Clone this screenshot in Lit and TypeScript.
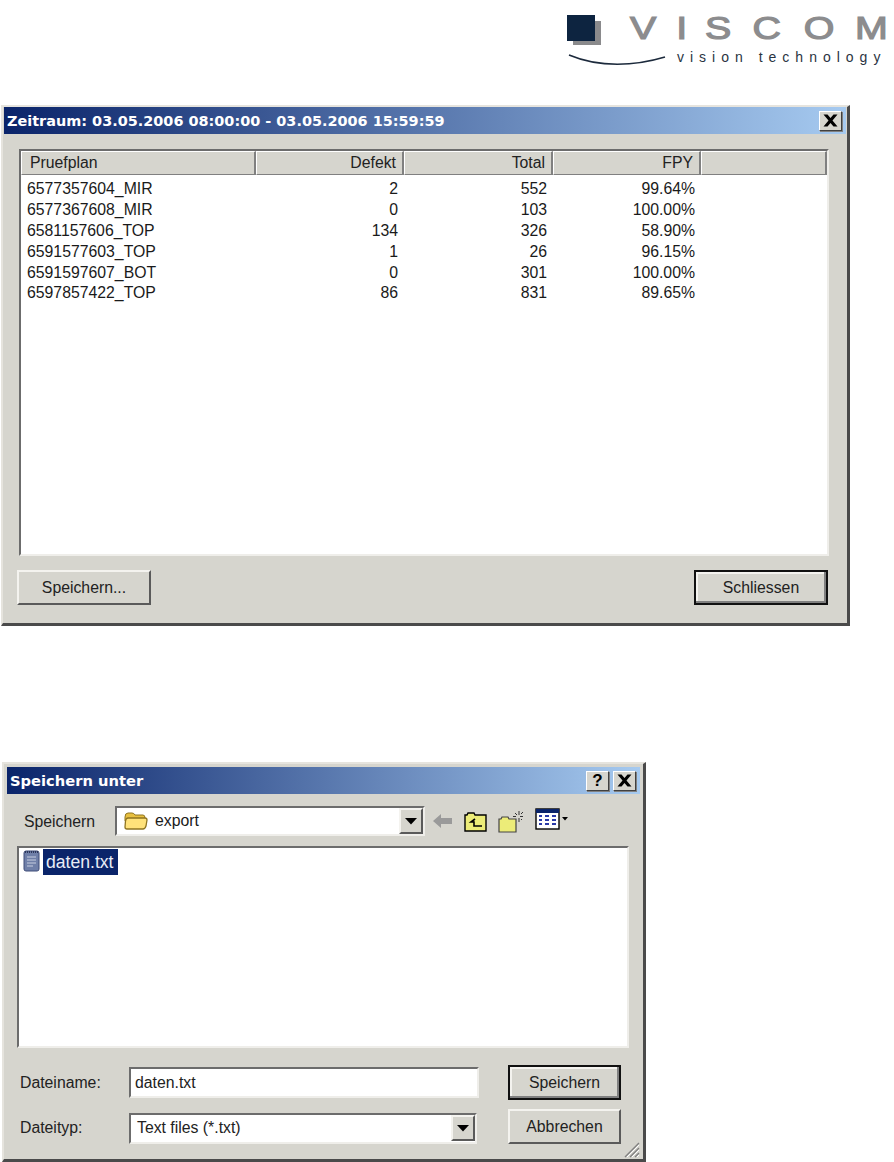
import { LitElement, html, css, svg } from "lit";
import { customElement } from "lit/decorators.js";

const rows = [
  ["6577357604_MIR", "2", "552", "99.64%"],
  ["6577367608_MIR", "0", "103", "100.00%"],
  ["6581157606_TOP", "134", "326", "58.90%"],
  ["6591577603_TOP", "1", "26", "96.15%"],
  ["6591597607_BOT", "0", "301", "100.00%"],
  ["6597857422_TOP", "86", "831", "89.65%"],
];

const closeX = html`<svg class="glyph" width="15" height="13" viewBox="0 0 15 13"><path d="M0.500 0.500 H4.500 L7.500 4 L10.500 0.500 H14.500 L9.500 6.500 L14.500 12.500 H10.500 L7.500 9 L4.500 12.500 H0.500 L5.500 6.500 Z" fill="#000"/></svg>`;
const downArrow = html`<svg width="12" height="7" viewBox="0 0 12 7"><path d="M0 0 H12 L6 6.500 Z" fill="#000"/></svg>`;

@customElement("app-root")
export class AppRoot extends LitElement {
  static styles = css`
    :host { display: block; width: 894px; height: 1162px; background: #fff; overflow: hidden;
      font-family: "Liberation Sans", Arial, sans-serif; color: #1a1a1a; font-size: 15.8px; }
    .logo-row { height: 105px; display: flex; justify-content: flex-end; }
    .logo { display: block; }
    .win { box-sizing: border-box; background: #d6d5ce; display: flex; flex-direction: column;
      border-top: 2px solid #e6e4de; border-left: 2px solid #e6e4de;
      border-right: 3px solid #4a4a4a; border-bottom: 3px solid #4a4a4a; padding: 0 1px; }
    .w1 { width: 849px; height: 521px; margin-left: 1px; }
    .w2 { width: 644px; height: 400px; margin: 136px 0 0 2px; padding: 3px 3px 0; position: relative; }
    .title { height: 27px; flex: none; display: flex; align-items: center; padding: 0 3px 0 3px; gap: 3px;
      background: linear-gradient(90deg, #0a246a, #a6caf0); color: #fff;
      font-family: "DejaVu Sans", sans-serif; font-weight: 700; font-size: 14.7px; white-space: nowrap; }
    .w1 .title { font-size: 14.45px; }
    .title .t { flex: 1; }
    .cap { box-sizing: border-box; width: 23px; height: 20px; background: #d6d5ce; display: flex;
      align-items: center; justify-content: center; font: 700 17px "Liberation Sans", sans-serif; color: #000;
      border: 1px solid; border-color: #fff #404040 #404040 #fff; box-shadow: 1px 1px 0 #808080; margin-right: 1px; }
    .b1 { flex: 1; display: flex; flex-direction: column; padding: 15px 17px 0 15px; }
    .list { box-sizing: border-box; width: 810px; height: 407px; background: #fff; display: flex; flex-direction: column;
      border: 2px solid; border-color: #6c6c6c #efeeea #efeeea #6c6c6c; }
    .head, .row { display: grid; grid-template-columns: 235px 148px 149px 148px 1fr; }
    .head { height: 24px; flex: none; background: #d6d5ce; }
    .hc { box-sizing: border-box; display: flex; align-items: center; justify-content: flex-end; padding: 0 6px 0 8px; color: #222;
      border: 1px solid; border-color: #fff #808080 #808080 #fff; border-right-width: 2px; }
    .hc.first { justify-content: flex-start; }
    .body { padding-top: 4px; }
    .row { height: 20.8px; align-items: center; }
    .row div { text-align: right; padding-right: 6px; }
    .row div:first-child { text-align: left; padding: 0 0 0 6px; }
    .actions { display: flex; justify-content: space-between; margin: 14px 1px 0 -2px; }
    .btn { box-sizing: border-box; width: 134px; height: 35px; background: #d6d5ce; display: flex; align-items: center; justify-content: center;
      border: 2px solid; border-color: #f4f3ef #5a5a5a #5a5a5a #f4f3ef; color: #222; }
    .btn.def { border: 2px solid #111; box-shadow: inset -2px -2px 0 #808080, inset 2px 2px 0 #f4f3ef; }
    .sm { width: 113px; }
    .b2 { flex: 1; display: flex; flex-direction: column; padding: 12px 0 0 10px; }
    .toolbar { display: flex; align-items: center; height: 30px; }
    .lbl { width: 98px; padding: 2px 0 0 7px; box-sizing: border-box; color: #222; }
    .combo { box-sizing: border-box; width: 310px; height: 30px; background: #fff; display: flex; align-items: center;
      border: 2px solid; border-color: #6c6c6c #efeeea #efeeea #6c6c6c; padding: 0 0 0 7px; gap: 7px; }
    .combo .v { flex: 1; }
    .drop { box-sizing: border-box; width: 24px; height: 26px; background: #d6d5ce; display: flex; align-items: center; justify-content: center;
      border: 2px solid; border-color: #f4f3ef #5a5a5a #5a5a5a #f4f3ef; }
    .tools { display: flex; align-items: center; gap: 11px; margin-left: 8px; }
    .flist { box-sizing: border-box; width: 612px; height: 202px; margin: 10px 0 0 0; background: #fff; padding: 1px 0 0 3px; display: flex; align-items: flex-start; gap: 2px;
      border: 2px solid; border-color: #6c6c6c #efeeea #efeeea #6c6c6c; }
    .sel { background: #0a246a; color: #e8ecf6; height: 26px; display: flex; align-items: center; padding: 0 4px 0 3px; font-size: 17.6px; }
    .fields { display: grid; grid-template-columns: 109px 350px 29px 113px; margin: 17px 0 0 3px; row-gap: 9px; align-items: center; }
    .flbl { color: #222; }
    .flbl.low { padding-top: 3px; }
    .input { box-sizing: border-box; height: 31px; background: #fff; display: flex; align-items: center; padding: 0 4px; color: #222;
      border: 2px solid; border-color: #6c6c6c #efeeea #efeeea #6c6c6c; }
    .input.c { width: 348px; padding: 0 0 0 6px; justify-content: space-between; margin-top: 3px; }
    .grip { position: absolute; right: 3px; bottom: 1px; }
  `;

  logo() {
    return svg`
      <rect x="33" y="21" width="28" height="24" fill="#8a8a8c"/>
      <rect x="27" y="15" width="28" height="26" fill="#0d2440"/>
      <path d="M29 55 C60 68 95 66 125 57" fill="none" stroke="#1c2a3c" stroke-width="1.6"/>
      <g fill="#8c8c8e" stroke="#8c8c8e" stroke-width="1.2" font-family="Liberation Sans" font-size="31.5">
        <text transform="scale(1.25 1)" y="39.5" x="72 109 132 170 211 252">VISCOM</text>
      </g>
      <text y="62" x="137" fill="#2a3442" font-family="Liberation Sans" font-size="14" letter-spacing="6">vision technology</text>`;
  }

  render() {
    return html`
      <div class="logo-row">
        <svg class="logo" width="354" height="105" viewBox="0 0 354 105">${this.logo()}</svg>
      </div>
      <section class="win w1">
        <div class="title"><span class="t">Zeitraum: 03.05.2006 08:00:00 - 03.05.2006 15:59:59</span><span class="cap">${closeX}</span></div>
        <div class="b1">
          <div class="list">
            <div class="head">
              <div class="hc first">Pruefplan</div><div class="hc">Defekt</div><div class="hc">Total</div><div class="hc">FPY</div><div class="hc"></div>
            </div>
            <div class="body">
              ${rows.map((r) => html`<div class="row">${r.map((c) => html`<div>${c}</div>`)}</div>`)}
            </div>
          </div>
          <div class="actions"><div class="btn">Speichern...</div><div class="btn def">Schliessen</div></div>
        </div>
      </section>
      <section class="win w2">
        <div class="title"><span class="t">Speichern unter</span><span class="cap">?</span><span class="cap">${closeX}</span></div>
        <div class="b2">
          <div class="toolbar">
            <div class="lbl">Speichern</div>
            <div class="combo">
              <svg width="24" height="20" viewBox="0 0 24 20"><path d="M1 6 Q1 2 4 2 H8 Q10 2 11 4 H19 Q21 4 21 7 V10 H1 Z" fill="#e8c040" stroke="#8f7420"/><path d="M1 16 Q1 18 3 18 H19 Q21 18 22 15 L23 9 Q23 7 21 7 H4 Q2 7 1.500 10 Z" fill="#ffe27a" stroke="#8f7420" stroke-width="1.300"/></svg>
              <span class="v">export</span>
              <span class="drop">${downArrow}</span>
            </div>
            <div class="tools">
              <svg width="20" height="14" viewBox="0 0 20 14"><path d="M0 7 L8 0 V4 H19 V10 H8 V14 Z" fill="#9a9a9a"/></svg>
              <svg width="23" height="21" viewBox="0 0 23 21"><path d="M1 20 V4 H3 L4 2 H10 L11 4 H22 V20 Z" fill="#ecec78" stroke="#000" stroke-width="1.4"/><path d="M11 8 L7 11 H10 V15 H18" fill="none" stroke="#000" stroke-width="1.6"/></svg>
              <svg width="26" height="23" viewBox="0 0 26 23"><path d="M1 22 V9 H3 L4 7 H10 L11 9 H18 V22 Z" fill="#ecec78" stroke="#444" stroke-width="1.2"/><path d="M21 1 V5 M21 8 V12 M15 6.500 H18 M22 6.500 H25 M17 3 L19 5 M25 2 L23 4 M24 10 L23 9" stroke="#333" stroke-width="1" fill="none"/></svg>
              <span>
                <svg width="33" height="22" viewBox="0 0 33 22"><rect x="1" y="1" width="23" height="20" fill="#fff" stroke="#000" stroke-width="1.4"/><rect x="1" y="1" width="23" height="4" fill="#0a246a"/><path d="M4 8 h3 M10 8 h4 M17 8 h4 M4 12 h3 M10 12 h4 M17 12 h4 M4 16 h3 M10 16 h4 M17 16 h4" stroke="#2a3aa8" stroke-width="2.200"/><path d="M27 9 h6 l-3 3.500 z" fill="#000"/></svg>
              </span>
            </div>
          </div>
          <div class="flist">
            <svg width="19" height="24" viewBox="0 0 19 24"><rect x="2" y="2" width="15" height="20" rx="2" fill="#6f7fa8" stroke="#3f4d78"/><path d="M5 8 h9 M5 11 h9 M5 14 h9 M5 17 h6" stroke="#c8cfe0" stroke-width="1"/><path d="M3 3 h13" stroke="#2c3658" stroke-width="2" stroke-dasharray="1 1"/></svg>
            <span class="sel">daten.txt</span>
          </div>
          <div class="fields">
            <div class="flbl">Dateiname:</div>
            <div class="input">daten.txt</div>
            <div></div>
            <div class="btn sm def">Speichern</div>
            <div class="flbl low">Dateityp:</div>
            <div class="input c"><span>Text files (*.txt)</span><span class="drop">${downArrow}</span></div>
            <div></div>
            <div class="btn sm">Abbrechen</div>
          </div>
        </div>
        <svg class="grip" width="18" height="18" viewBox="0 0 18 18"><path d="M3 17 L17 3 M8 17 L17 8 M13 17 L17 13" stroke="#808080" stroke-width="1.4"/><path d="M5 17 L17 5 M10 17 L17 10 M15 17 L17 15" stroke="#fff" stroke-width="1"/></svg>
      </section>
    `;
  }
}
